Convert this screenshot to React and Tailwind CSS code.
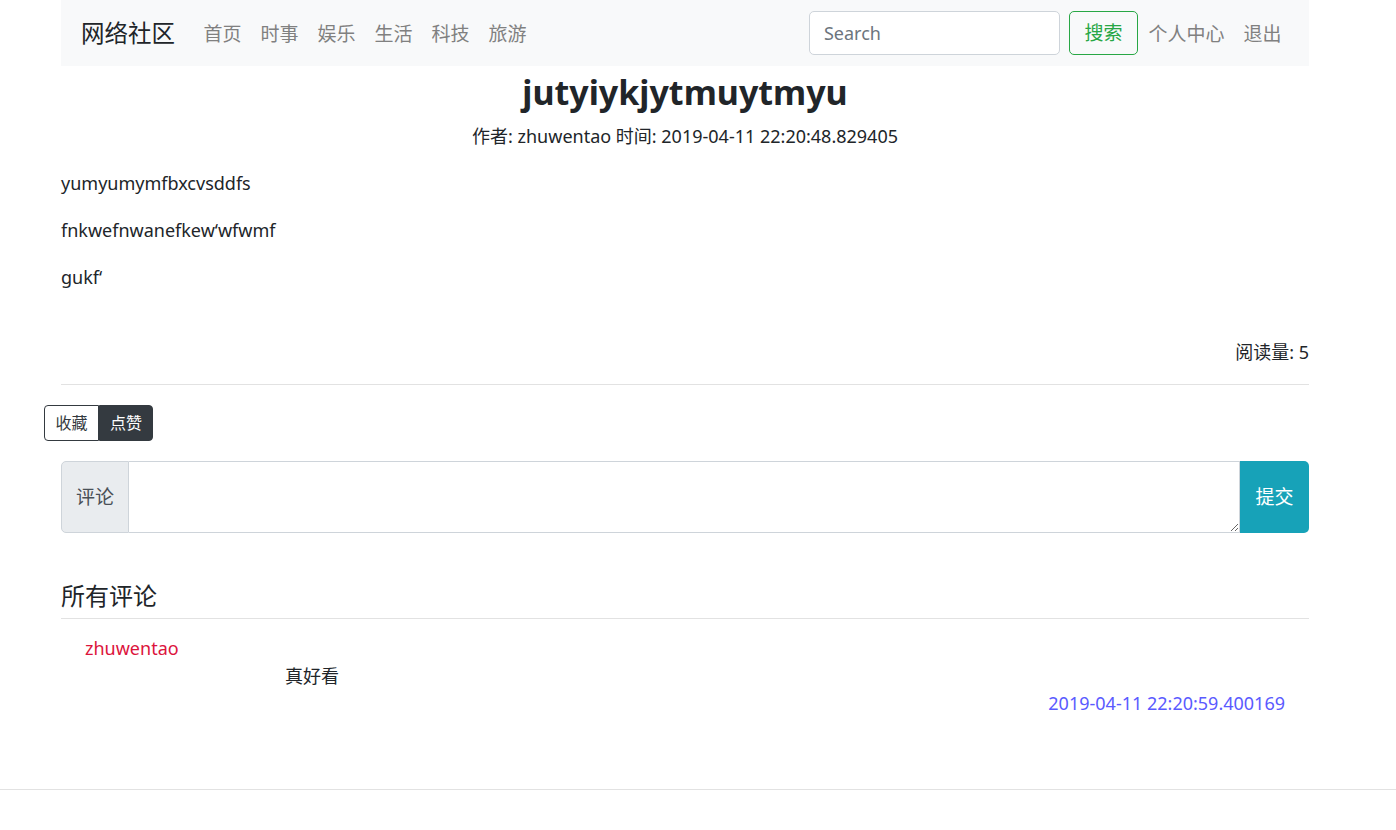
const navItems = ["首页", "时事", "娱乐", "生活", "科技", "旅游"];

const paragraphs = ["yumyumymfbxcvsddfs", "fnkwefnwanefkew‘wfwmf", "gukf‘"];

const Navbar = () => (
  <nav className="flex h-[66px] items-center bg-[#f8f9fa] pl-[20px] pr-[18px] pt-[2px]">
    <a className="mr-[19px] text-[23.5px] leading-none text-[#212529]">网络社区</a>
    <ul className="flex items-center">
      {navItems.map((item) => (
        <li key={item}>
          <a className="block px-[9.5px] text-[19px] leading-[28px] text-[#808080]">{item}</a>
        </li>
      ))}
    </ul>
    <div className="ml-auto flex items-center">
      <input
        type="text"
        placeholder="Search"
        className="-mt-[2px] h-[44px] w-[251px] rounded-[5px] border border-[#ced4da] bg-white px-[14px] text-[18px] text-[#495057] outline-none placeholder:text-[#6c757d]"
      />
      <button
        type="button"
        className="-mt-[2px] ml-[9px] mr-[1px] h-[44px] w-[69px] rounded-[5px] border border-[#28a745] text-[19px] text-[#28a745]"
      >
        搜索
      </button>
      <a className="px-[9.5px] text-[19px] leading-[28px] text-[#808080]">个人中心</a>
      <a className="px-[9.5px] text-[19px] leading-[28px] text-[#808080]">退出</a>
    </div>
  </nav>
);

const App = () => (
  <div
    className="min-h-[830px] bg-white text-[18px] text-[#212529]"
    style={{ fontFamily: '"Noto Sans", "Noto Sans CJK SC", sans-serif' }}
  >
    <div className="ml-[61px] w-[1248px]">
      <Navbar />

      <h1 className="mt-[4px] text-center text-[34px] font-bold leading-[44px]">jutyiykjytmuytmyu</h1>
      <p className="mt-[9px] text-center leading-[27px]">
        作者: zhuwentao 时间: 2019-04-11 22:20:48.829405
      </p>

      <div className="mt-[20px] space-y-[20px]">
        {paragraphs.map((text) => (
          <p key={text} className="leading-[27px]">
            {text}
          </p>
        ))}
      </div>

      <p className="mt-[48px] text-right leading-[27px]">阅读量: 5</p>
      <hr className="mt-[18px] border-0 border-t border-[#e2e2e2]" />

      <div className="-ml-[17px] mt-[20px] flex">
        <button
          type="button"
          className="h-[36px] w-[55px] rounded-l-[4px] border border-[#343a40] bg-white text-[16px] text-[#343a40]"
        >
          收藏
        </button>
        <button
          type="button"
          className="h-[36px] w-[54px] rounded-r-[4px] border border-[#343a40] bg-[#343a40] text-[16px] text-white"
        >
          点赞
        </button>
      </div>

      <div className="mt-[20px] flex h-[72px]">
        <span className="flex w-[68px] items-center justify-center rounded-l-[5px] border border-[#ced4da] bg-[#e9ecef] text-[19px] text-[#495057]">
          评论
        </span>
        <textarea className="h-full flex-1 resize-y border border-l-0 border-[#ced4da] bg-white px-3 py-2 outline-none" />
        <button
          type="button"
          className="w-[69px] rounded-r-[5px] bg-[#17a2b8] text-[19px] text-white"
        >
          提交
        </button>
      </div>

      <h4 className="mt-[48px] text-[24px] leading-[29px]">所有评论</h4>
      <hr className="mt-[8px] border-0 border-t border-[#e2e2e2]" />

      <div className="mt-[16px] px-[24px]">
        <p className="leading-[27px] text-[#dc143c]">zhuwentao</p>
        <p className="ml-[200px] mt-[1px] leading-[27px]">真好看</p>
        <p className="text-right leading-[27px] text-[#5a5aff]">2019-04-11 22:20:59.400169</p>
      </div>
    </div>

    <hr className="mt-[72px] border-0 border-t border-[#e2e2e2]" />
  </div>
);

export default App;
